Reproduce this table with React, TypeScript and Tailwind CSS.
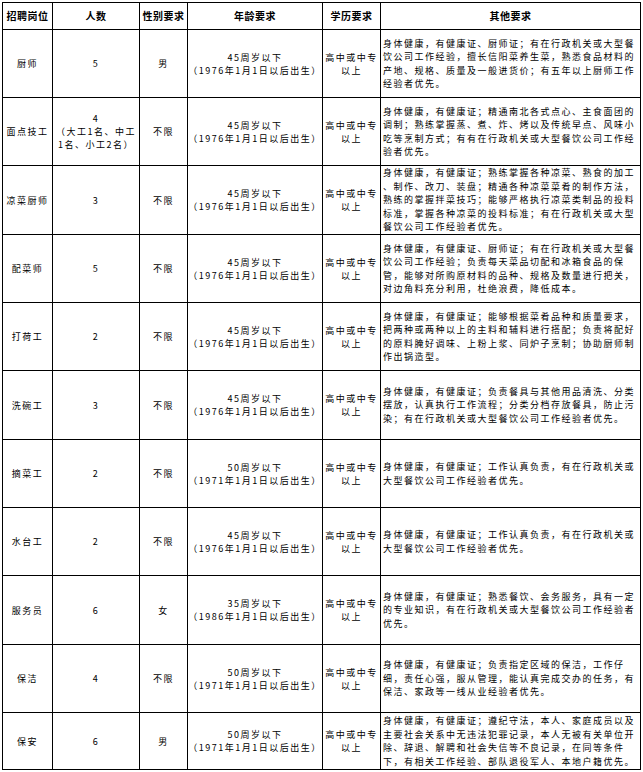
import React from "react";

type Job = {
  name: string;
  count: React.ReactNode;
  gender: string;
  age: string;
  born: string;
  other: string[];
  h: string;
};

const jobs: Job[] = [
  {
    name: "厨师",
    count: "5",
    gender: "男",
    age: "45周岁以下",
    born: "（1976年1月1日以后出生）",
    h: "h-[68px]",
    other: [
      "身体健康，有健康证、厨师证；有在行政机关或大型餐",
      "饮公司工作经验，擅长信阳菜养生菜，熟悉食品材料的",
      "产地、规格、质量及一般进货价；有五年以上厨师工作",
      "经验者优先。",
    ],
  },
  {
    name: "面点技工",
    count: (
      <>
        4
        <br />
        （大工1名、中工
        <br />
        1名、小工2名）
      </>
    ),
    gender: "不限",
    age: "45周岁以下",
    born: "（1976年1月1日以后出生）",
    h: "h-[68px]",
    other: [
      "身体健康，有健康证；精通南北各式点心、主食面团的",
      "调制；熟练掌握蒸、煮、炸、烤以及传统早点、风味小",
      "吃等烹制方式；有有在行政机关或大型餐饮公司工作经",
      "验者优先。",
    ],
  },
  {
    name: "凉菜厨师",
    count: "3",
    gender: "不限",
    age: "45周岁以下",
    born: "（1976年1月1日以后出生）",
    h: "h-[69px]",
    other: [
      "身体健康，有健康证；熟练掌握各种凉菜、熟食的加工",
      "、制作、改刀、装盘；精通各种凉菜菜肴的制作方法，",
      "熟练的掌握拌菜技巧；能够严格执行凉菜类制品的投料",
      "标准，掌握各种凉菜的投料标准；有在行政机关或大型",
      "餐饮公司工作经验者优先。",
    ],
  },
  {
    name: "配菜师",
    count: "5",
    gender: "不限",
    age: "45周岁以下",
    born: "（1976年1月1日以后出生）",
    h: "h-[68px]",
    other: [
      "身体健康，有健康证、厨师证；有在行政机关或大型餐",
      "饮公司工作经验；负责每天菜品切配和冰箱食品的保",
      "管，能够对所购原材料的品种、规格及数量进行把关，",
      "对边角料充分利用，杜绝浪费，降低成本。",
    ],
  },
  {
    name: "打荷工",
    count: "2",
    gender: "不限",
    age: "45周岁以下",
    born: "（1976年1月1日以后出生）",
    h: "h-[68px]",
    other: [
      "身体健康，有健康证；能够根据菜肴品种和质量要求，",
      "把两种或两种以上的主料和辅料进行搭配；负责将配好",
      "的原料腌好调味、上粉上浆、同炉子烹制；协助厨师制",
      "作出锅造型。",
    ],
  },
  {
    name: "洗碗工",
    count: "3",
    gender: "不限",
    age: "45周岁以下",
    born: "（1976年1月1日以后出生）",
    h: "h-[69px]",
    other: [
      "身体健康，有健康证；负责餐具与其他用品清洗、分类",
      "摆放，认真执行工作流程；分类分档存放餐具，防止污",
      "染；有在行政机关或大型餐饮公司工作经验者优先。",
    ],
  },
  {
    name: "摘菜工",
    count: "2",
    gender: "不限",
    age: "50周岁以下",
    born: "（1971年1月1日以后出生）",
    h: "h-[68px]",
    other: [
      "身体健康，有健康证；工作认真负责，有在行政机关或",
      "大型餐饮公司工作经验者优先。",
    ],
  },
  {
    name: "水台工",
    count: "2",
    gender: "不限",
    age: "45周岁以下",
    born: "（1976年1月1日以后出生）",
    h: "h-[68px]",
    other: [
      "身体健康，有健康证；工作认真负责，有在行政机关或",
      "大型餐饮公司工作经验者优先。",
    ],
  },
  {
    name: "服务员",
    count: "6",
    gender: "女",
    age: "35周岁以下",
    born: "（1986年1月1日以后出生）",
    h: "h-[69px]",
    other: [
      "身体健康，有健康证；熟悉餐饮、会务服务，具有一定",
      "的专业知识，有在行政机关或大型餐饮公司工作经验者",
      "优先。",
    ],
  },
  {
    name: "保洁",
    count: "4",
    gender: "不限",
    age: "50周岁以下",
    born: "（1971年1月1日以后出生）",
    h: "h-[68px]",
    other: [
      "身体健康，有健康证；负责指定区域的保洁，工作仔",
      "细，责任心强，服从管理，能认真完成交办的任务，有",
      "保洁、家政等一线从业经验者优先。",
    ],
  },
  {
    name: "保安",
    count: "6",
    gender: "男",
    age: "50周岁以下",
    born: "（1971年1月1日以后出生）",
    h: "h-[57px]",
    other: [
      "身体健康，有健康证；遵纪守法，本人、家庭成员以及",
      "主要社会关系中无违法犯罪记录，本人无被有关单位开",
      "除、辞退、解聘和社会失信等不良记录，在同等条件",
      "下，有相关工作经验、部队退役军人、本地户籍优先。",
    ],
  },
];

const cell = "border border-black align-middle p-0";

function App() {
  return (
    <div className="w-[643px] h-[772px] bg-white pt-[2px] pl-[2px] font-['Noto_Sans_CJK_SC',sans-serif] text-black">
      <table className="table-fixed border-collapse w-[638px]">
        <colgroup>
          <col className="w-[50px]" />
          <col className="w-[87px]" />
          <col className="w-[48px]" />
          <col className="w-[135px]" />
          <col className="w-[58px]" />
          <col className="w-[260px]" />
        </colgroup>
        <thead>
          <tr className="h-[27px] text-[10px] font-bold tracking-[0.5px] leading-[12px]">
            <th className={cell}>招聘岗位</th>
            <th className={cell}>人数</th>
            <th className={cell}>性别要求</th>
            <th className={cell}>年龄要求</th>
            <th className={cell}>学历要求</th>
            <th className={cell}>其他要求</th>
          </tr>
        </thead>
        <tbody className="text-[9px] tracking-[1.5px] leading-[13px]">
          {jobs.map((job) => (
            <tr key={job.name} className={job.h}>
              <td className={`${cell} text-center`}>{job.name}</td>
              <td className={`${cell} text-center`}>{job.count}</td>
              <td className={`${cell} text-center`}>{job.gender}</td>
              <td className={`${cell} text-center`}>
                {job.age}
                <br />
                {job.born}
              </td>
              <td className={`${cell} text-center`}>
                高中或中专
                <br />
                以上
              </td>
              <td className={`${cell} pl-[2px] text-left whitespace-nowrap leading-[13.5px]`}>
                {job.other.map((line) => (
                  <div key={line}>{line}</div>
                ))}
              </td>
            </tr>
          ))}
        </tbody>
      </table>
    </div>
  );
}

export default App;
